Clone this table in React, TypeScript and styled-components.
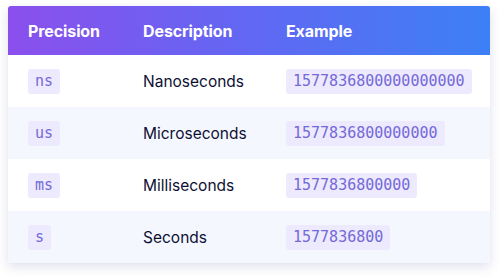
import * as React from 'react';
import styled, { createGlobalStyle } from 'styled-components';

const GlobalStyle = createGlobalStyle`
  html, body {
    margin: 0;
    padding: 0;
    background: #ffffff;
  }
  body {
    font-family: Inter, "Noto Sans", sans-serif;
  }
`;

const rows = [
  { unit: 'ns', name: 'Nanoseconds', example: '1577836800000000000' },
  { unit: 'us', name: 'Microseconds', example: '1577836800000000' },
  { unit: 'ms', name: 'Milliseconds', example: '1577836800000' },
  { unit: 's', name: 'Seconds', example: '1577836800' },
];

const App = () => (
  <Page>
    <GlobalStyle />
    <Card>
      <HeaderRow>
        <HeadCell>Precision</HeadCell>
        <HeadCell>Description</HeadCell>
        <HeadCell>Example</HeadCell>
      </HeaderRow>
      {rows.map((row, i) => (
        <Row key={row.unit} $striped={i % 2 === 1}>
          <Cell>
            <Code>{row.unit}</Code>
          </Cell>
          <Cell>{row.name}</Cell>
          <Cell>
            <Code>{row.example}</Code>
          </Cell>
        </Row>
      ))}
    </Card>
  </Page>
);

const Page = styled.div({
  padding: '6px 13px 15px 8px',
});

const Card = styled.div({
  width: 482,
  borderRadius: 3,
  overflow: 'hidden',
  background: '#ffffff',
  boxShadow: '0 4px 12px rgba(60, 70, 140, 0.16), 0 0 2px rgba(60, 70, 140, 0.06)',
});

const grid = {
  display: 'grid',
  gridTemplateColumns: '115px 143px 1fr',
  alignItems: 'center',
  paddingLeft: 20,
} as const;

const HeaderRow = styled.div({
  ...grid,
  height: 49,
  background: 'linear-gradient(90deg, #8b4fed 0%, #6565f2 45%, #3d80f6 100%)',
});

const HeadCell = styled.div({
  color: '#ffffff',
  fontWeight: 700,
  fontSize: 16,
  letterSpacing: -0.1,
});

const Row = styled.div<{ $striped: boolean }>(({ $striped }) => ({
  ...grid,
  height: 52,
  background: $striped ? '#f5f7ff' : '#ffffff',
}));

const Cell = styled.div({
  color: '#0d1033',
  fontSize: 15.5,
  display: 'flex',
  alignItems: 'center',
});

const Code = styled.code({
  fontFamily: '"DejaVu Sans Mono", "Liberation Mono", monospace',
  fontSize: 15,
  lineHeight: '25px',
  padding: '0 7px',
  borderRadius: 3,
  color: '#7469d8',
  background: '#edeafe',
});

export default App;
